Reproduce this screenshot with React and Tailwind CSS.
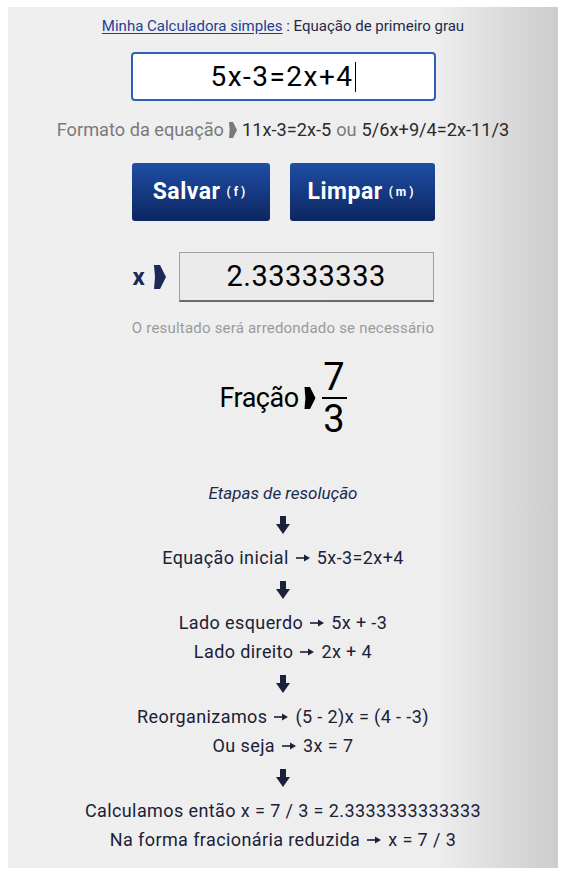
import React from "react";

const F = { fontFamily: "Roboto, 'Noto Sans', sans-serif" };

function Chev({ className }) {
  return (
    <svg viewBox="0 0 12 24" className={className} fill="currentColor">
      <polygon points="0,0 6,0 12,12 6,24 0,24 1,12" />
    </svg>
  );
}

function Arr() {
  return (
    <svg viewBox="0 0 14 8" className="inline-block w-[14px] h-[8px] mx-[7px] align-middle relative top-[-1px]" fill="currentColor">
      <rect x="0" y="3.2" width="9" height="1.6" />
      <polygon points="8,0.5 14,4 8,7.5" />
    </svg>
  );
}

function Down() {
  return (
    <svg viewBox="0 0 14 18" className="w-[14px] h-[18px] my-[9px] text-[#1b2138]" fill="currentColor">
      <rect x="4" y="0" width="6" height="9" />
      <polygon points="0,8 14,8 7,18" />
    </svg>
  );
}

export default function App() {
  return (
    <div className="bg-white w-[566px] h-[875px] pt-[7px]" style={F}>
      <div className="mx-2 h-[861px] bg-[linear-gradient(to_right,#efefef_0%,#eeeeee_78%,#d8d8d8_92%,#cdcdcd_100%)] flex flex-col items-center pt-[9px]">
        <div className="text-[15px] leading-[20px] text-[#1e2a4a]">
          <span className="text-[#1f3f95] underline underline-offset-2">Minha Calculadora simples</span> : Equação de primeiro grau
        </div>
        <div className="mt-[16px] w-[305px] h-[49px] bg-white border-2 border-[#3060b8] rounded-[4px] flex items-center justify-center">
          <span className="text-[28px] text-black tracking-[1.5px]">5x-3=2x+4</span>
          <span className="w-[1px] h-[30px] bg-black ml-[1px]"></span>
        </div>
        <div className="mt-[17px] text-[18.2px] leading-[24px] text-[#7a7a7a] flex items-center">
          <span>Formato da equação</span>
          <Chev className="w-[8px] h-[16px] mx-[5px] text-[#7a7a7a]" />
          <span className="text-[#2b2b2b]">11x-3=2x-5</span>
          <span className="mx-[5px]">ou</span>
          <span className="text-[#2b2b2b]">5/6x+9/4=2x-11/3</span>
        </div>
        <div className="mt-[21px] flex gap-[20px]">
          <div className="w-[138px] h-[58px] rounded-[3px] bg-[linear-gradient(to_bottom,#1e4ea5,#0c2660)] flex items-center justify-center text-white">
            <span className="text-[23px] font-bold tracking-[0.5px]">Salvar</span>
            <span className="text-[12px] font-bold tracking-[3px] ml-[6px]">(f)</span>
          </div>
          <div className="w-[145px] h-[58px] rounded-[3px] bg-[linear-gradient(to_bottom,#1e4ea5,#0c2660)] flex items-center justify-center text-white">
            <span className="text-[23px] font-bold tracking-[0.5px]">Limpar</span>
            <span className="text-[12px] font-bold tracking-[3px] ml-[6px]">(m)</span>
          </div>
        </div>
        <div className="mt-[31px] flex items-center">
          <span className="text-[24px] font-bold text-[#1b2a55]">x</span>
          <Chev className="w-[12px] h-[24px] ml-[9px] mr-[13px] text-[#1b2a55]" />
          <div className="w-[255px] h-[50px] bg-[#ebebeb] border border-[#a0a0a0] border-b-2 border-b-[#6a6a6a] flex items-center justify-center">
            <span className="text-[29px] text-black tracking-[0.5px]">2.33333333</span>
          </div>
        </div>
        <div className="mt-[16px] text-[15px] leading-[20px] text-[#9a9a9a] tracking-[0.2px]">
          O resultado será arredondado se necessário
        </div>
        <div className="mt-[20px] flex items-center text-black">
          <span className="text-[27px] tracking-[-0.5px]">Fração</span>
          <Chev className="w-[12px] h-[22px] ml-[5px] mr-[6px] text-black" />
          <div className="flex flex-col items-center">
            <span className="text-[38px] leading-[38px]">7</span>
            <span className="w-[25px] h-[1.5px] bg-black my-[1px]"></span>
            <span className="text-[38px] leading-[38px]">3</span>
          </div>
        </div>
        <div className="mt-[44px] text-[17px] leading-[22px] italic text-[#1a2a50]">Etapas de resolução</div>
        <div className="mt-[3px]"></div>
        <Down />
        <div className="text-[18px] leading-[29px] text-[#1b2138] text-center tracking-[0.4px]">
          <div>Equação inicial<Arr />5x-3=2x+4</div>
        </div>
        <Down />
        <div className="text-[18px] leading-[29px] text-[#1b2138] text-center tracking-[0.4px]">
          <div>Lado esquerdo<Arr />5x + -3</div>
          <div>Lado direito<Arr />2x + 4</div>
        </div>
        <Down />
        <div className="text-[18px] leading-[29px] text-[#1b2138] text-center tracking-[0.4px]">
          <div>Reorganizamos<Arr />(5 - 2)x = (4 - -3)</div>
          <div>Ou seja<Arr />3x = 7</div>
        </div>
        <Down />
        <div className="text-[18px] leading-[29px] text-[#1b2138] text-center tracking-[0.4px]">
          <div>Calculamos então x = 7 / 3 = 2.3333333333333</div>
          <div>Na forma fracionária reduzida<Arr />x = 7 / 3</div>
        </div>
      </div>
    </div>
  );
}
